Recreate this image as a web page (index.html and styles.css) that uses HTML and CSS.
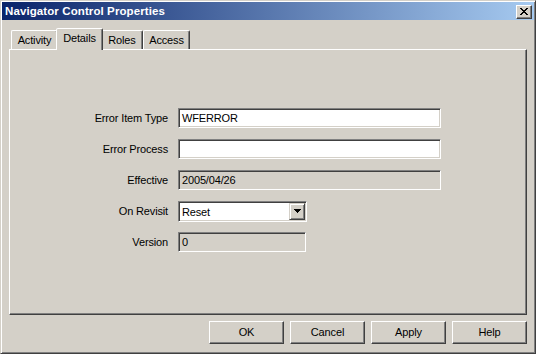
FILE: index.html
```html
<!DOCTYPE html>
<html>
<head>
<meta charset="utf-8">
<link rel="stylesheet" href="styles.css">
</head>
<body>
<div class="window">
  <div class="titlebar">
    <span class="title">Navigator Control Properties</span>
    <div class="close-btn">
      <svg width="8" height="7" viewBox="0 0 8 7" shape-rendering="crispEdges">
        <path d="M0 0h2v1h-2z M6 0h2v1h-2z M1 1h2v1h-2z M5 1h2v1h-2z M2 2h4v1h-4z M3 3h2v1h-2z M2 4h4v1h-4z M1 5h2v1h-2z M5 5h2v1h-2z M0 6h2v1h-2z M6 6h2v1h-2z" fill="#000"/>
      </svg>
    </div>
  </div>
  <div class="main">
    <div class="tabs">
      <div class="tab tab-activity">Activity</div>
      <div class="tab tab-details selected">Details</div>
      <div class="tab tab-roles">Roles</div>
      <div class="tab tab-access">Access</div>
    </div>
    <div class="panel">
      <div class="form">
        <div class="label">Error Item Type</div>
        <div class="field wide">WFERROR</div>
        <div class="label">Error Process</div>
        <div class="field wide"></div>
        <div class="label">Effective</div>
        <div class="field wide disabled">2005/04/26</div>
        <div class="label">On Revisit</div>
        <div class="field combo">
          <span class="combo-text">Reset</span>
          <span class="drop-btn">
            <svg width="7" height="4" viewBox="0 0 7 4" shape-rendering="crispEdges"><path d="M0 0h7v1h-7z M1 1h5v1h-5z M2 2h3v1h-3z M3 3h1v1h-1z" fill="#000"/></svg>
          </span>
        </div>
        <div class="label">Version</div>
        <div class="field short disabled">0</div>
      </div>
    </div>
    <div class="buttons">
      <div class="btn">OK</div>
      <div class="btn">Cancel</div>
      <div class="btn">Apply</div>
      <div class="btn">Help</div>
    </div>
  </div>
</div>
</body>
</html>
```
FILE: styles.css
```css
html, body {
  margin: 0;
  padding: 0;
  background: #d4d0c8;
}
body {
  font-family: "Liberation Sans", Arial, sans-serif;
  font-size: 11px;
  letter-spacing: -0.15px;
  color: #000;
}
.window {
  width: 536px;
  height: 354px;
  box-sizing: border-box;
  background: #d4d0c8;
  border-style: solid;
  border-width: 1px;
  border-color: #d4d0c8 #404040 #404040 #d4d0c8;
  box-shadow: inset 1px 1px #ffffff, inset -1px -1px #808080;
  padding: 1px;
  display: flex;
  flex-direction: column;
}
.titlebar {
  height: 18px;
  background: linear-gradient(to right, #0a246a, #a6caf0);
  display: flex;
  align-items: center;
  justify-content: space-between;
  padding: 0 2px 0 3px;
}
.title {
  color: #fff;
  font-weight: bold;
  font-size: 11.5px;
  letter-spacing: 0.1px;
}
.close-btn {
  width: 16px;
  height: 14px;
  box-sizing: border-box;
  background: #d4d0c8;
  border-style: solid;
  border-width: 1px;
  border-color: #ffffff #404040 #404040 #ffffff;
  box-shadow: inset -1px -1px #808080;
  display: flex;
  align-items: center;
  justify-content: center;
  margin-top: 1px;
}
.close-btn svg { display: block; margin-left: -1px; margin-top: -1px; }
.main {
  flex: 1;
  padding: 8px 7px 0 7px;
  display: flex;
  flex-direction: column;
}
.tabs {
  display: flex;
  align-items: flex-end;
  height: 21px;
  padding-left: 2px;
}
.tab {
  height: 19px;
  box-sizing: border-box;
  padding-top: 3px;
  text-align: center;
  border-style: solid;
  border-width: 1px 1px 0 1px;
  border-color: #ffffff #404040 transparent #ffffff;
  box-shadow: inset -1px 0 #808080;
  border-radius: 2px 2px 0 0;
  white-space: nowrap;
}
.tab-activity { width: 47px; }
.tab-details { width: 43px; }
.tab-roles { width: 42px; }
.tab-access { width: 47px; }
.tab.selected {
  position: relative;
  z-index: 1;
  width: 47px;
  height: 22px;
  margin: 0 -2px -1px -2px;
  padding-top: 3px;
  background: #d4d0c8;
}
.panel {
  height: 266px;
  box-sizing: border-box;
  border-style: solid;
  border-width: 1px;
  border-color: #ffffff #404040 #404040 #ffffff;
  box-shadow: inset -1px -1px #808080;
  padding-top: 58px;
}
.form {
  display: grid;
  grid-template-columns: 158px 263px;
  grid-auto-rows: 20px;
  column-gap: 10px;
  row-gap: 11px;
  align-items: center;
}
.label {
  text-align: right;
  white-space: nowrap;
}
.field {
  height: 20px;
  box-sizing: border-box;
  background: #fff;
  border-style: solid;
  border-width: 1px;
  border-color: #808080 #ffffff #ffffff #808080;
  box-shadow: inset 1px 1px #404040, inset -1px -1px #d4d0c8;
  padding: 3px 0 0 3px;
  white-space: nowrap;
}
.field.disabled {
  background: #d4d0c8;
}
.field.short {
  width: 128px;
}
.field.combo {
  width: 129px;
  height: 21px;
  display: flex;
  align-items: flex-start;
  justify-content: space-between;
  padding: 1px 1px 1px 3px;
}
.combo-text {
  padding-top: 3px;
}
.drop-btn {
  width: 16px;
  height: 17px;
  box-sizing: border-box;
  background: #d4d0c8;
  border-style: solid;
  border-width: 1px;
  border-color: #d4d0c8 #404040 #404040 #d4d0c8;
  box-shadow: inset 1px 1px #ffffff, inset -1px -1px #808080;
  display: flex;
  align-items: center;
  justify-content: center;
}
.drop-btn svg { display: block; }
.buttons {
  display: flex;
  justify-content: flex-end;
  gap: 6px;
  margin-top: 6px;
}
.btn {
  width: 75px;
  height: 23px;
  box-sizing: border-box;
  border-style: solid;
  border-width: 1px;
  border-color: #ffffff #404040 #404040 #ffffff;
  box-shadow: inset -1px -1px #808080;
  display: flex;
  align-items: center;
  justify-content: center;
  padding-bottom: 1px;
}
```
